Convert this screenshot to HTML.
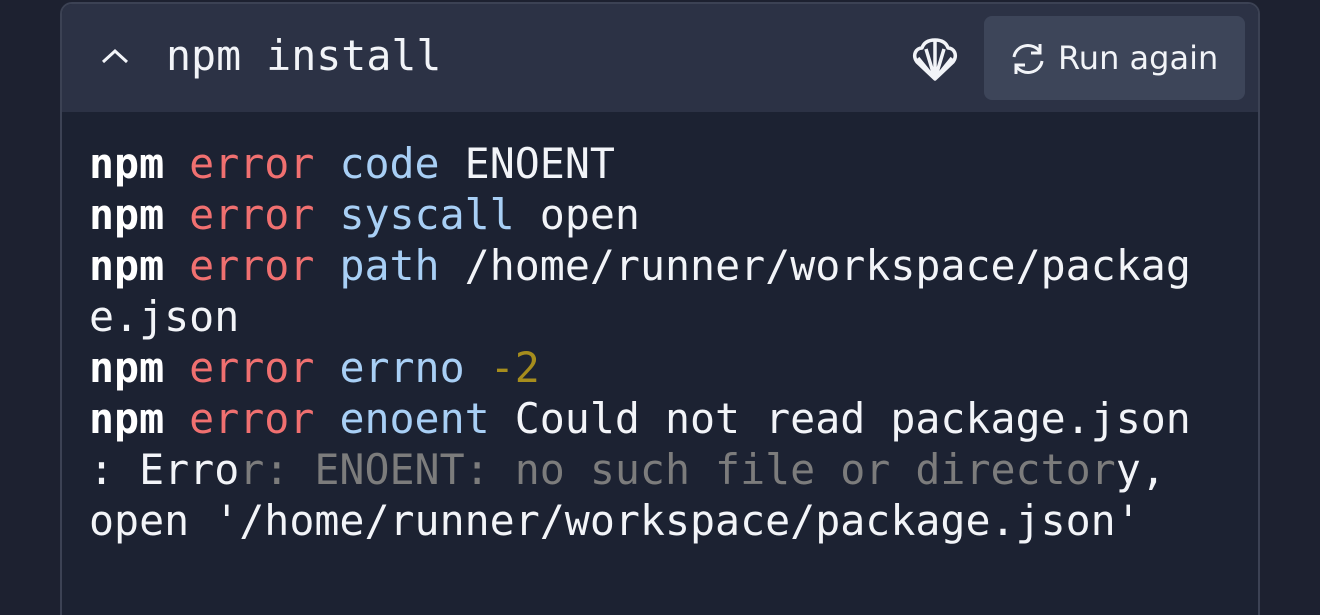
<!DOCTYPE html>
<html><head><meta charset="utf-8"><style>
html,body{margin:0;padding:0;width:1320px;height:615px;overflow:hidden;background:#1d2130;}
.panel{position:absolute;left:60px;top:2px;width:1196px;height:630px;border:2px solid #3c4254;border-radius:12px;background:#1c2232;overflow:hidden;}
.wrap{position:absolute;left:0;top:0;width:1320px;height:615px;overflow:hidden;}
.hdr{height:108px;background:#2c3245;position:relative;}
.title{position:absolute;left:104px;top:27px;font:41.6px/50px "DejaVu Sans Mono","Liberation Mono",monospace;color:#f2f4f8;}
.btn{position:absolute;left:922px;top:12px;width:261px;height:84px;background:#3d4559;border-radius:8px;}
.btn span{position:absolute;left:74px;top:20px;font:32px/44px "DejaVu Sans","Liberation Sans",sans-serif;color:#f2f4f8;}
pre{position:absolute;left:27px;top:134px;margin:0;font:41.6px/51px "DejaVu Sans Mono","Liberation Mono",monospace;color:#f2f4f8;}
b{font-weight:bold;color:#fff}
.r{color:#f07070}.bl{color:#a8cff5}.y{color:#a68d1d}.g{color:#7c7c7c}
</style></head><body>
<div class="wrap">
<div class="panel">
<div class="hdr">
<svg style="position:absolute;left:38px;top:42px" width="30" height="20" viewBox="0 0 30 20"><path d="M3 16 L15 5 L27 16" fill="none" stroke="#f2f4f8" stroke-width="3"/></svg>
<div class="title">npm install</div>
<svg style="position:absolute;left:850px;top:34px" width="46" height="44" viewBox="0 0 46 44"><path d="M23 41 L5 24 C0 17 4 10 10 10 C12 4 17 2 23 2 C29 2 34 4 36 10 C42 10 46 17 41 24 Z M23 41 L14 11 M23 41 L32 11 M23 41 L23 3 M23 41 L6 20 M23 41 L40 20" fill="none" stroke="#f2f4f8" stroke-width="3.5" stroke-linejoin="round"/></svg>
<div class="btn">
<svg style="position:absolute;left:26px;top:26px" width="36" height="34" viewBox="0 0 36 34"><path d="M4 15 A14 13 0 0 1 30 10 M30 2 L30 11 L21 11 M32 19 A14 13 0 0 1 6 24 M6 32 L6 23 L15 23" fill="none" stroke="#f2f4f8" stroke-width="3"/></svg>
<span>Run again</span>
</div>
</div>
<pre><b>npm</b> <span class="r">error</span> <span class="bl">code</span> ENOENT
<b>npm</b> <span class="r">error</span> <span class="bl">syscall</span> open
<b>npm</b> <span class="r">error</span> <span class="bl">path</span> /home/runner/workspace/packag
e.json
<b>npm</b> <span class="r">error</span> <span class="bl">errno</span> <span class="y">-2</span>
<b>npm</b> <span class="r">error</span> <span class="bl">enoent</span> Could not read package.json
: Erro<span class="g">r: ENOENT: no such file or director</span>y,
open '/home/runner/workspace/package.json'</pre>
</div>
</div>
</body></html>
